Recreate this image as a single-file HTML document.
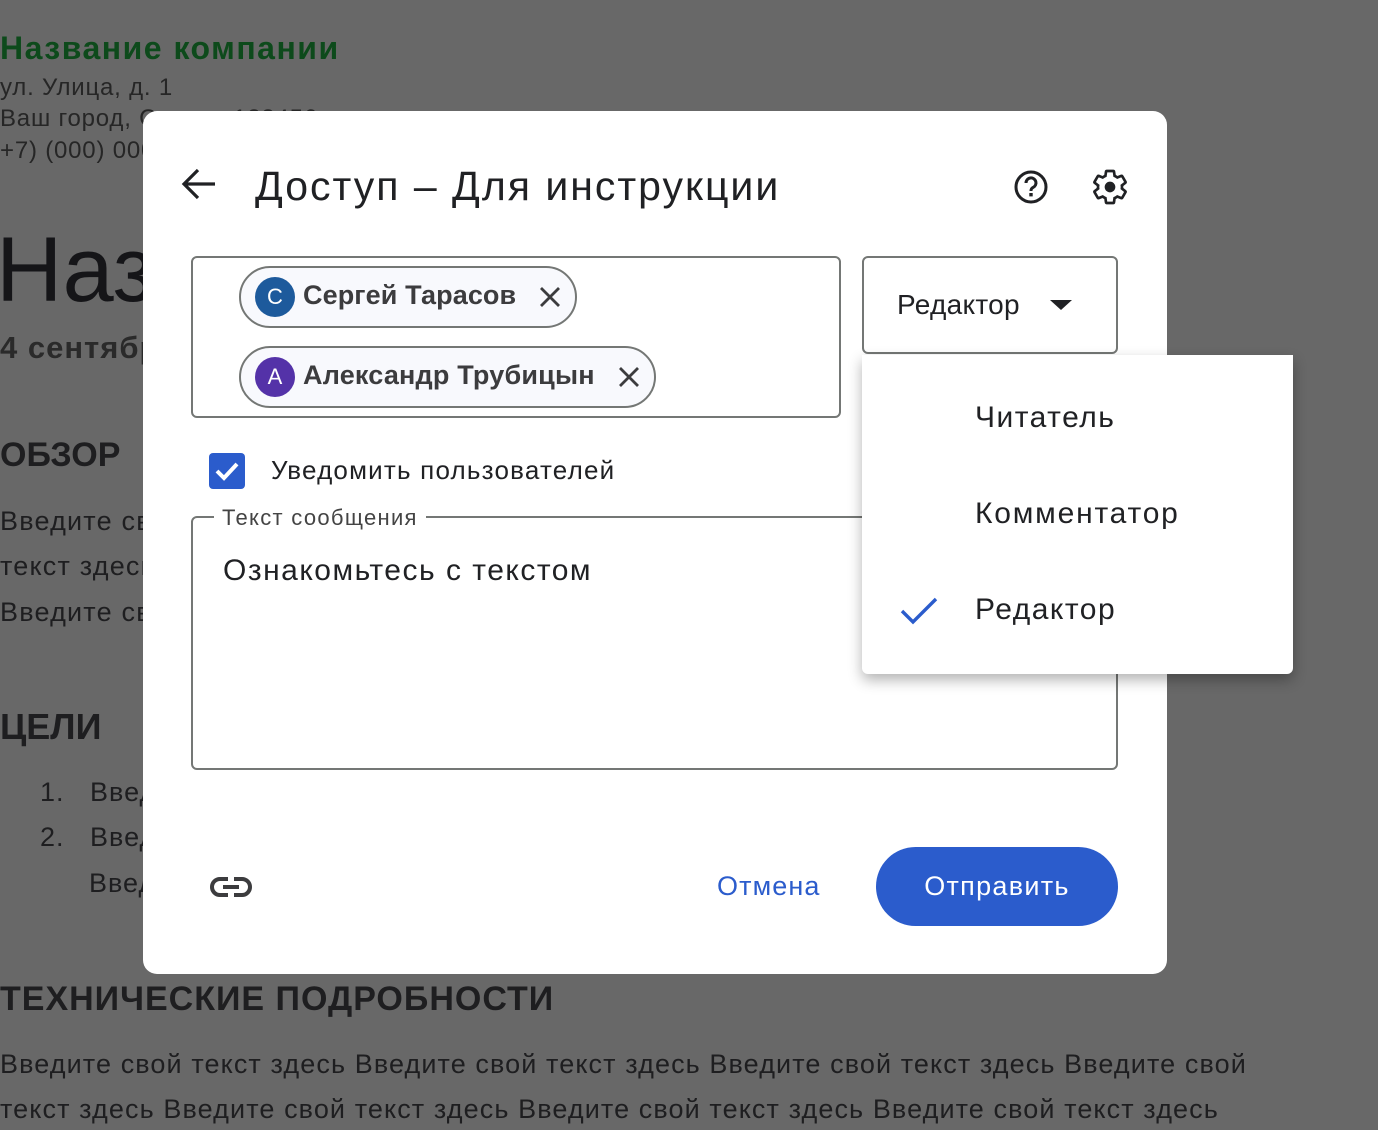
<!DOCTYPE html>
<html><head><meta charset="utf-8"><style>
*{box-sizing:border-box;margin:0;padding:0}
body{width:1378px;height:1130px;overflow:hidden;background:#686868;font-family:"Liberation Sans","DejaVu Sans",sans-serif;position:relative}
.a{position:absolute;white-space:nowrap}
.bg{color:#1e1e20}
.dlg{position:absolute;left:143px;top:111px;width:1024px;height:863px;background:#fff;border-radius:14px}
.t{color:#202124}
</style></head><body>
<div class="a" style="left:0;top:30px;font-size:32px;font-weight:bold;color:#0d4a1b;letter-spacing:1.5px">Название компании</div>
<div class="a bg" style="left:0;top:74px;font-size:24px;color:#262626;letter-spacing:0.8px">ул. Улица, д. 1</div>
<div class="a bg" style="left:0;top:105px;font-size:24px;color:#262626;letter-spacing:0.8px">Ваш город, Страна 123456</div>
<div class="a bg" style="left:0;top:137px;font-size:24px;color:#262626;letter-spacing:0.8px">+7) (000) 000-00-00</div>
<div class="a bg" style="left:-4px;top:218px;font-size:92px;color:#151518">Название</div>
<div class="a bg" style="left:0;top:330px;font-size:31px;font-weight:bold;color:#2a2a2a;letter-spacing:1px">4 сентября</div>
<div class="a bg" style="left:0;top:436px;font-size:34px;font-weight:bold">ОБЗОР</div>
<div class="a bg" style="left:0;top:506px;font-size:27px;letter-spacing:1.2px">Введите свой</div>
<div class="a bg" style="left:0;top:551px;font-size:27px;letter-spacing:1.2px">текст здесь</div>
<div class="a bg" style="left:0;top:597px;font-size:27px;letter-spacing:1.2px">Введите свой</div>
<div class="a bg" style="left:0;top:706px;font-size:36px;font-weight:bold">ЦЕЛИ</div>
<div class="a bg" style="left:40px;top:777px;font-size:27px;letter-spacing:1px">1.&nbsp;&nbsp;&nbsp;Введите</div>
<div class="a bg" style="left:40px;top:822px;font-size:27px;letter-spacing:1px">2.&nbsp;&nbsp;&nbsp;Введите</div>
<div class="a bg" style="left:89px;top:868px;font-size:27px;letter-spacing:1px">Введите</div>
<div class="a bg" style="left:0;top:980px;font-size:34px;font-weight:bold;letter-spacing:1px">ТЕХНИЧЕСКИЕ ПОДРОБНОСТИ</div>
<div class="a bg" style="left:0;top:1049px;font-size:27px;letter-spacing:1.1px">Введите свой текст здесь Введите свой текст здесь Введите свой текст здесь Введите свой</div>
<div class="a bg" style="left:0;top:1094px;font-size:27px;letter-spacing:1.1px">текст здесь Введите свой текст здесь Введите свой текст здесь Введите свой текст здесь</div>

<div class="dlg"></div>
<svg class="a" style="left:180px;top:166px" width="38" height="36" viewBox="0 0 38 36"><path d="M35 18H5M18 4L4 18l14 14" fill="none" stroke="#202124" stroke-width="3.2"/></svg>
<div class="a t" style="left:255px;top:163px;font-size:41px;letter-spacing:2px">Доступ – Для инструкции</div>
<svg class="a" style="left:1012px;top:168px" width="38" height="38" viewBox="0 0 38 38"><circle cx="19" cy="19" r="15" fill="none" stroke="#202124" stroke-width="3"/><path d="M14 15a5 5 0 1 1 7 4.5c-1.5.8-2 1.5-2 3.5" fill="none" stroke="#202124" stroke-width="3"/><rect x="17.3" y="25" width="3.4" height="3.4" fill="#202124"/></svg>
<svg class="a" style="left:1090px;top:167px" width="40" height="40" viewBox="0 0 24 24"><path d="M19.14 12.94c.04-.3.06-.61.06-.94 0-.32-.02-.64-.07-.94l2.030-1.58a.49.49 0 0 0 .12-.61l-1.920-3.32a.49.49 0 0 0-.59-.22l-2.39.96c-.5-.38-1.03-.7-1.62-.94l-.36-2.54a.48.48 0 0 0-.48-.41h-3.84c-.24 0-.43.17-.47.41l-.36 2.54c-.59.24-1.130.57-1.62.94l-2.39-.96a.48.48 0 0 0-.59.22L2.74 8.870c-.12.21-.08.47.12.61l2.03 1.58c-.05.3-.09.63-.09.94s.02.64.07.94l-2.03 1.58a.49.49 0 0 0-.12.61l1.92 3.32c.12.22.37.29.59.22l2.39-.96c.5.38 1.03.7 1.62.94l.36 2.54c.05.24.24.41.48.41h3.84c.24 0 .44-.17.47-.41l.36-2.54c.59-.24 1.13-.56 1.62-.94l2.39.96c.22.08.47 0 .59-.22l1.92-3.32c.12-.22.07-.47-.12-.61l-2.01-1.58z" fill="none" stroke="#202124" stroke-width="1.6"/><circle cx="12" cy="12" r="3.2" fill="#202124"/></svg>

<div class="a" style="left:191px;top:256px;width:650px;height:162px;border:2px solid #747775;border-radius:6px"></div>
<div class="a" style="left:239px;top:266px;width:338px;height:62px;border:2px solid #747775;border-radius:31px;background:#f8f9fd"></div>
<div class="a" style="left:255px;top:277px;width:40px;height:40px;border-radius:50%;background:#1d5a9c;color:#fff;font-size:22px;text-align:center;line-height:40px">С</div>
<div class="a" style="left:303px;top:280px;font-size:27px;color:#3c3c3e;font-weight:bold;letter-spacing:0.1px">Сергей Тарасов</div>
<svg class="a" style="left:538px;top:285px" width="24" height="24"><path d="M3 3l18 18M21 3L3 21" stroke="#3c3c3e" stroke-width="2.8"/></svg>
<div class="a" style="left:239px;top:346px;width:417px;height:62px;border:2px solid #747775;border-radius:31px;background:#f8f9fd"></div>
<div class="a" style="left:255px;top:357px;width:40px;height:40px;border-radius:50%;background:#5432a8;color:#fff;font-size:22px;text-align:center;line-height:40px">А</div>
<div class="a" style="left:303px;top:360px;font-size:27px;color:#3c3c3e;font-weight:bold;letter-spacing:0.2px">Александр Трубицын</div>
<svg class="a" style="left:617px;top:365px" width="24" height="24"><path d="M3 3l18 18M21 3L3 21" stroke="#3c3c3e" stroke-width="2.8"/></svg>

<div class="a" style="left:862px;top:256px;width:256px;height:98px;border:2px solid #747775;border-radius:6px"></div>
<div class="a t" style="left:897px;top:289px;font-size:28px;letter-spacing:0.3px">Редактор</div>
<svg class="a" style="left:1049px;top:299px" width="24" height="12"><path d="M1 1h22L12 11z" fill="#202124"/></svg>

<div class="a" style="left:209px;top:453px;width:36px;height:36px;border-radius:4px;background:#2b5ccc"></div>
<svg class="a" style="left:209px;top:453px" width="36" height="36"><path d="M8 18l7 7 13-14" fill="none" stroke="#fff" stroke-width="4"/></svg>
<div class="a t" style="left:271px;top:455px;font-size:26px;letter-spacing:1.2px">Уведомить пользователей</div>

<div class="a" style="left:191px;top:516px;width:927px;height:254px;border:2px solid #747775;border-radius:6px"></div>
<div class="a" style="left:214px;top:505px;padding:0 8px;background:#fff;font-size:22px;color:#444;letter-spacing:1.3px">Текст сообщения</div>
<div class="a t" style="left:223px;top:554px;font-size:30px;letter-spacing:1.5px">Ознакомьтесь с текстом</div>

<svg class="a" style="left:210px;top:876px" width="42" height="22" viewBox="0 0 42 22"><path d="M18 3H10a8 8 0 0 0 0 16h8M24 3h8a8 8 0 0 1 0 16h-8M13 11h16" fill="none" stroke="#3c3c3e" stroke-width="4"/></svg>
<div class="a" style="left:717px;top:871px;font-size:27px;color:#2b5ccc;letter-spacing:1.1px">Отмена</div>
<div class="a" style="left:876px;top:847px;width:242px;height:79px;border-radius:40px;background:#2b5ccc;color:#fff;font-size:27px;text-align:center;line-height:79px;letter-spacing:1.3px">Отправить</div>

<div class="a" style="left:862px;top:355px;width:431px;height:319px;background:#fff;border-radius:0 0 6px 6px;box-shadow:0 6px 14px rgba(0,0,0,.3)"></div>
<div class="a t" style="left:975px;top:401px;font-size:30px;letter-spacing:1.5px">Читатель</div>
<div class="a t" style="left:975px;top:497px;font-size:30px;letter-spacing:1.8px">Комментатор</div>
<svg class="a" style="left:900px;top:596px" width="38" height="30"><path d="M2 15l11 11L36 3" fill="none" stroke="#2b5ccc" stroke-width="3.4"/></svg>
<div class="a t" style="left:975px;top:593px;font-size:30px;letter-spacing:1.5px">Редактор</div>
</body></html>
